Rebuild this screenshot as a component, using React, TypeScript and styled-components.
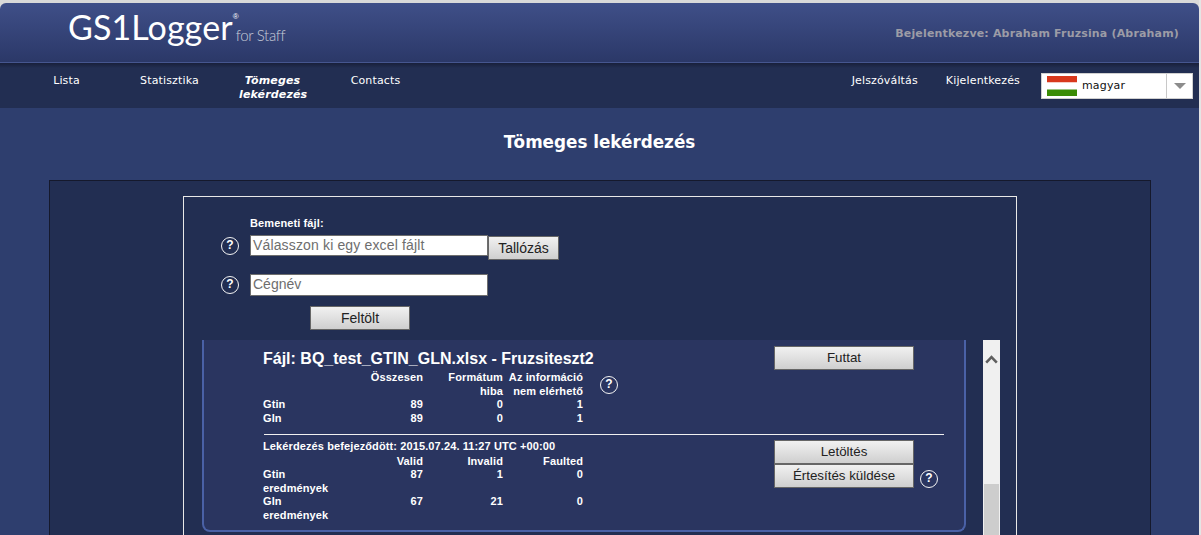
import styled, { createGlobalStyle } from 'styled-components';

const GlobalStyle = createGlobalStyle`
  html, body {
    margin: 0;
    height: 535px;
    overflow: hidden;
    background: #e4e4e4;
  }
  * { box-sizing: border-box; }
`;

const App = () => {
  return (
    <Page>
      <GlobalStyle />
      <TopStrip>
        <Header>
          <Logo>
            <LogoName>GS1Logger</LogoName>
            <LogoMark>®</LogoMark>
            <LogoSub>for Staff</LogoSub>
          </Logo>
          <LoggedIn>Bejelentkezve: Abraham Fruzsina (Abraham)</LoggedIn>
        </Header>
      </TopStrip>
      <Nav>
        <NavLeft>
          <NavItem>Lista</NavItem>
          <NavItem>Statisztika</NavItem>
          <NavItem $active>Tömeges lekérdezés</NavItem>
          <NavItem>Contacts</NavItem>
        </NavLeft>
        <NavRight>
          <NavLink>Jelszóváltás</NavLink>
          <NavLink>Kijelentkezés</NavLink>
          <LangSelect>
            <svg width="30" height="20" viewBox="0 0 30 20">
              <rect width="30" height="6.5" fill="#d8381c" />
              <rect y="6.5" width="30" height="7" fill="#ffffff" />
              <rect y="13.5" width="30" height="6.5" fill="#3a8c06" />
            </svg>
            <LangName>magyar</LangName>
            <LangArrow>
              <svg width="12" height="6" viewBox="0 0 12 6">
                <path d="M0 0h12L6 6z" fill="#8c8c8c" />
              </svg>
            </LangArrow>
          </LangSelect>
        </NavRight>
      </Nav>
      <Content>
        <PageTitle>Tömeges lekérdezés</PageTitle>
        <Panel>
          <InnerBox>
            <Form>
              <FieldLabel>Bemeneti fájl:</FieldLabel>
              <FieldRow>
                <HelpIcon>?</HelpIcon>
                <TextBox>Válasszon ki egy excel fájlt</TextBox>
                <BrowseButton>Tallózás</BrowseButton>
              </FieldRow>
              <FieldRow $second>
                <HelpIcon>?</HelpIcon>
                <TextBox $tall>Cégnév</TextBox>
              </FieldRow>
              <UploadButton>Feltölt</UploadButton>
            </Form>
            <Scroller>
              <Card>
                <CardSection>
                  <div>
                    <FileTitle>Fájl: BQ_test_GTIN_GLN.xlsx - Fruzsiteszt2</FileTitle>
                    <StatsRow>
                      <Stats>
                        <span />
                        <Num>Összesen</Num>
                        <Num>Formátum hiba</Num>
                        <Num>Az információ nem elérhető</Num>
                        <span>Gtin</span>
                        <Num>89</Num>
                        <Num>0</Num>
                        <Num>1</Num>
                        <span>Gln</span>
                        <Num>89</Num>
                        <Num>0</Num>
                        <Num>1</Num>
                      </Stats>
                      <StatsHelp>?</StatsHelp>
                    </StatsRow>
                  </div>
                  <RunButton>Futtat</RunButton>
                </CardSection>
                <Divider />
                <CardSection>
                  <div>
                    <Finished>Lekérdezés befejeződött: 2015.07.24. 11:27 UTC +00:00</Finished>
                    <Stats>
                      <span />
                      <Num>Valid</Num>
                      <Num>Invalid</Num>
                      <Num>Faulted</Num>
                      <span>Gtin eredmények</span>
                      <Num>87</Num>
                      <Num>1</Num>
                      <Num>0</Num>
                      <span>Gln eredmények</span>
                      <Num>67</Num>
                      <Num>21</Num>
                      <Num>0</Num>
                    </Stats>
                  </div>
                  <Actions>
                    <WideButton>Letöltés</WideButton>
                    <NotifyRow>
                      <WideButton>Értesítés küldése</WideButton>
                      <HelpIcon>?</HelpIcon>
                    </NotifyRow>
                  </Actions>
                </CardSection>
              </Card>
              <Scrollbar>
                <ScrollArrow>
                  <svg width="13" height="9" viewBox="0 0 13 9">
                    <path d="M1.2 7.6 6.5 2.2l5.3 5.4" fill="none" stroke="#5f5f5f" strokeWidth="2.6" />
                  </svg>
                </ScrollArrow>
                <ScrollThumb />
              </Scrollbar>
            </Scroller>
          </InnerBox>
        </Panel>
      </Content>
    </Page>
  );
};

const Page = styled.div`
  width: 1201px;
  height: 535px;
  padding-right: 2px;
  overflow: hidden;
  background: #e4e4e4;
  font-family: "DejaVu Sans", Verdana, sans-serif;
`;

const TopStrip = styled.div`
  padding-top: 3px;
  background: #d9d9d9;
`;

const Header = styled.header`
  display: flex;
  align-items: flex-start;
  justify-content: space-between;
  height: 60px;
  padding: 0 20px 0 68px;
  border-radius: 6px 6px 0 0;
  border-bottom: 1px solid #46568f;
  background: linear-gradient(#3f4f88, #2b3868);
`;

const Logo = styled.div`
  display: flex;
  align-items: flex-start;
  color: #ffffff;
`;

const LogoName = styled.span`
  margin-top: 4px;
  font-family: Lato, sans-serif;
  font-size: 34px;
  line-height: 40px;
  letter-spacing: 0.1px;
`;

const LogoMark = styled.span`
  margin-top: 9px;
  width: 6px;
  font-family: "Liberation Sans", sans-serif;
  font-size: 8px;
  line-height: 10px;
`;

const LogoSub = styled.span`
  margin: 22px 0 0 -3px;
  font-family: Lato, sans-serif;
  font-size: 15px;
  font-weight: 300;
  line-height: 20px;
  letter-spacing: -0.3px;
  color: #c8ccd8;
`;

const LoggedIn = styled.div`
  margin-top: 24px;
  font-size: 11px;
  font-weight: bold;
  line-height: 14px;
  letter-spacing: 0.17px;
  color: #9c9ca6;
`;

const Nav = styled.nav`
  display: flex;
  justify-content: space-between;
  height: 45px;
  padding: 0 6px 0 15px;
  background: linear-gradient(#181f3a, #222e52 5px);
  letter-spacing: 0.15px;
`;

const NavLeft = styled.div`
  display: flex;
`;

const NavItem = styled.a<{ $active?: boolean }>`
  width: 103px;
  padding: 11px 18px 0;
  font-size: 11px;
  line-height: 14px;
  text-align: center;
  color: #ffffff;
  font-weight: ${p => (p.$active ? 'bold' : 'normal')};
  font-style: ${p => (p.$active ? 'italic' : 'normal')};
`;

const NavRight = styled.div`
  display: flex;
  gap: 28px;
`;

const NavLink = styled.a`
  padding-top: 11px;
  font-size: 11px;
  line-height: 14px;
  color: #ffffff;
`;

const LangSelect = styled.div`
  display: flex;
  align-items: center;
  width: 152px;
  height: 26px;
  margin: 10px 0 0 -7px;
  padding-left: 5px;
  border: 1px solid #d0d0d0;
  background: #ffffff;
`;

const LangName = styled.span`
  flex: 1;
  margin-left: 5px;
  padding-bottom: 2px;
  font-size: 11px;
  color: #111111;
`;

const LangArrow = styled.span`
  display: flex;
  align-items: center;
  justify-content: center;
  width: 26px;
  height: 100%;
  border-left: 1px solid #c8c8c8;
`;

const Content = styled.div`
  height: 427px;
  background: #2e3e6e;
`;

const PageTitle = styled.h1`
  margin: 0;
  height: 72px;
  padding-top: 24px;
  font-size: 16.8px;
  font-weight: bold;
  line-height: 20px;
  text-align: center;
  color: #ffffff;
`;

const Panel = styled.main`
  width: 1102px;
  height: 400px;
  margin-left: 49px;
  padding: 15px 0 0 133px;
  border: 1px solid #15192c;
  background: #222e52;
`;

const InnerBox = styled.section`
  width: 834px;
  height: 400px;
  padding-left: 18px;
  border: 1px solid #e8e8e8;
  font-family: "Liberation Sans", Arial, sans-serif;
  font-size: 11px;
  font-weight: bold;
  line-height: 13.5px;
  letter-spacing: 0.11px;
  color: #ffffff;
`;

const Form = styled.div`
  height: 143px;
  padding: 20px 0 0 19px;
`;

const FieldLabel = styled.div`
  margin-left: 29px;
  line-height: 13px;
`;

const FieldRow = styled.div<{ $second?: boolean }>`
  display: flex;
  align-items: flex-start;
  margin-top: ${p => (p.$second ? '14px' : '5px')};
`;

const HelpIcon = styled.span`
  flex: none;
  display: flex;
  align-items: center;
  justify-content: center;
  width: 18px;
  height: 18px;
  margin: 2px 11px 0 0;
  border: 1.5px solid #f4f4f4;
  border-radius: 50%;
  font-family: "Liberation Sans", Arial, sans-serif;
  font-size: 12px;
  font-weight: bold;
  color: #ffffff;
`;

const TextBox = styled.div<{ $tall?: boolean }>`
  width: 238px;
  height: ${p => (p.$tall ? '22px' : '21px')};
  padding: 0 2px;
  border: 1px solid #6e6e6e;
  background: #ffffff;
  font-size: 14px;
  font-weight: normal;
  line-height: 19px;
  color: #6e6e6e;
  letter-spacing: ${p => (p.$tall ? '0' : '0.15px')};
`;

const Button = styled.button`
  display: block;
  padding: 0;
  height: 24px;
  border: 1px solid #666666;
  background: linear-gradient(#f1f1f1, #cfcfcf);
  font-family: "Liberation Sans", Arial, sans-serif;
  font-size: 14px;
  line-height: 20px;
  color: #222222;
`;

const BrowseButton = styled(Button)`
  width: 71px;
  margin-top: 1px;
`;

const UploadButton = styled(Button)`
  width: 100px;
  margin: 10px 0 0 89px;
`;

const Scroller = styled.div`
  display: flex;
  align-items: flex-start;
  gap: 17px;
  height: 195px;
`;

const Card = styled.div`
  width: 764px;
  height: 192px;
  padding: 6px 20px 0 59px;
  border: 2px solid #4a61a6;
  border-top: none;
  border-radius: 0 0 8px 8px;
  background: #2a3560;
`;

const CardSection = styled.div`
  display: flex;
  justify-content: space-between;
`;

const FileTitle = styled.div`
  height: 24px;
  margin-top: 1px;
  font-size: 16px;
  line-height: 24px;
  letter-spacing: 0;
`;

const StatsRow = styled.div`
  display: flex;
  align-items: flex-start;
`;

const Stats = styled.div`
  display: grid;
  grid-template-columns: 80px 80px 80px 80px;
`;

const Num = styled.span`
  padding-left: 3px;
  text-align: right;
`;

const StatsHelp = styled(HelpIcon)`
  margin: 5px 0 0 17px;
`;

const WideButton = styled(Button)`
  width: 140px;
  font-size: 13.33px;
`;

const RunButton = styled(WideButton)`
  margin-right: 30px;
`;

const Divider = styled.hr`
  width: 680px;
  height: 1px;
  margin: 9px 0 5px 1px;
  border: none;
  background: #f0f0f0;
`;

const Finished = styled.div`
  margin-bottom: 1px;
`;

const Actions = styled.div`
  width: 164px;
  margin-right: 6px;
`;

const NotifyRow = styled.div`
  display: flex;
  gap: 6px;
  align-items: flex-start;

  ${HelpIcon} {
    margin: 6px 0 0;
  }
`;

const Scrollbar = styled.div`
  width: 17px;
  height: 195px;
  padding: 0 1px;
  background: #f0f0f0;
`;

const ScrollArrow = styled.div`
  display: flex;
  justify-content: center;
  height: 144px;
  padding-top: 15px;
`;

const ScrollThumb = styled.div`
  height: 51px;
  background: #cdcdcd;
`;

export default App;
